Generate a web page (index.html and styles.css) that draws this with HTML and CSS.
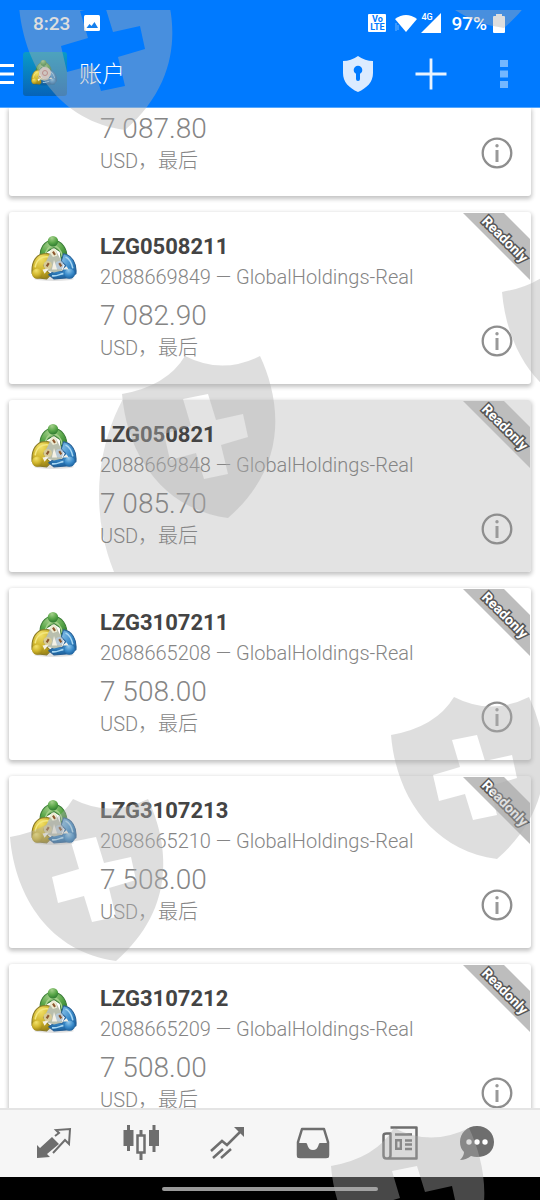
FILE: index.html
```html
<!DOCTYPE html>
<html lang="zh-CN">
<head>
<meta charset="utf-8">
<meta name="viewport" content="width=device-width, initial-scale=1">
<title>账户</title>
<link rel="stylesheet" href="styles.css">
</head>
<body>
<svg class="defs" aria-hidden="true">
  <defs>
    <radialGradient id="green" cx=".4" cy=".2" r=".9"><stop offset="0" stop-color="#a5d08c"/><stop offset=".5" stop-color="#5aa749"/><stop offset="1" stop-color="#23702a"/></radialGradient>
    <radialGradient id="yellow" cx=".4" cy=".2" r=".9"><stop offset="0" stop-color="#f3e26a"/><stop offset=".5" stop-color="#d0b52c"/><stop offset="1" stop-color="#8a7410"/></radialGradient>
    <radialGradient id="blue" cx=".4" cy=".2" r=".9"><stop offset="0" stop-color="#8fc6ea"/><stop offset=".5" stop-color="#3b8ccb"/><stop offset="1" stop-color="#125490"/></radialGradient>
    <linearGradient id="tile" x1="0" y1="0" x2="0" y2="1"><stop offset="0" stop-color="#0a9bc8"/><stop offset="1" stop-color="#0663b8"/></linearGradient>
    <symbol id="logo" viewBox="0 0 44 44">
      <ellipse cx="22" cy="41" rx="19" ry="2" fill="#000" opacity=".12"/>
      <path d="M9 23C7 12 13 4 21 4s15 8 13 20l-5-1-1-8-6-4-7 4-1 8z" fill="url(#green)" stroke="#3c7d38"/>
      <path d="M13 21c1-7 3-11 8-12 6 1 8 5 9 11" fill="none" stroke="#a5d08c" stroke-width="1.500"/>
      <path d="M1 36C0 24 6 16 14 17c6-1 8 4 8 8l-5-1-5 4 4 6 3 3-4 4-10-1z" fill="url(#yellow)" stroke="#8b7b27"/>
      <path d="M4 30c1-7 6-11 13-10" fill="none" stroke="#f3e780" stroke-width="1.500"/>
      <path d="M43 36c1-10-4-18-12-19l-2 7 4 4-3 6-7-1-6 4 5 4 15-1z" fill="url(#blue)" stroke="#275f94"/>
      <path d="M33 20c4 2 6 6 7 11M20 38c5 1 8-2 11-2" fill="none" stroke="#a8d7f3" stroke-width="1.500"/>
      <circle cx="21" cy="5" r="5" fill="url(#green)"/><circle cx="6" cy="36" r="5" fill="url(#yellow)"/><circle cx="37" cy="36" r="5" fill="url(#blue)"/>
      <path d="M19 15l5-1 5 10 1 9-8 2-7-2-1-8z" fill="#b9bfae"/>
      <path d="M20 12l4 1 1 6-4 1-3-4z" fill="#ecebd2"/><circle cx="16" cy="28" r="4" fill="#d6cb98"/><circle cx="27" cy="28" r="4" fill="#b9cad6"/>
      <path d="M22 23l3 9h-5zM11 32l6-1-4 5zM30 32l4-3 2 3z" fill="#f4f1e6"/>
      <path d="M21 15l2 3M17 26l-2 3M27 26l2 3" stroke="#8c572e" stroke-width="2"/>
    </symbol>
    <symbol id="info" viewBox="0 0 32 32">
      <circle cx="16" cy="16" r="14.300" fill="none" stroke="#8e8e8e" stroke-width="2.300"/>
      <circle cx="16" cy="8.800" r="1.700" fill="#999"/><path d="M16 13v12" stroke="#999" stroke-width="3"/>
    </symbol>
    <path id="guard" fill-rule="evenodd" d="M0 0Q45-8 63-38Q100-19 138-38C158 5 168 70 106 124C40 115 5 60 0 0ZM61 5L69 32L42 40L48 66L74 59L82 85L106 80L99 51L126 43L121 20L94 26L86 0Z"/>
  </defs>
</svg>
<div class="app">
  <header class="top">
    <div class="status">
      <span class="clock">8:23</span>
      <svg class="photo" width="16" height="16" viewBox="0 0 16 16"><rect width="16" height="16" rx="1.500" fill="#fff"/><path d="M2.500 13l3-4 2 2 3-4 3.500 6z" fill="#147fed"/></svg>
      <span class="spring"></span>
      <span class="volte"><span>Vo</span><span>LTE</span></span>
      <svg class="wifi" width="22" height="18" viewBox="0 0 22 18"><path d="M0 5Q11-3 22 5L11 18z" fill="#fff"/><path d="M1 9v8M3 11v5" stroke="#6cb5ff"/></svg>
      <span class="cell"><span class="gen">4G</span><svg width="20" height="20" viewBox="0 0 20 20"><path d="M20 0v20H0z" fill="#fff"/></svg></span>
      <span class="percent">97%</span>
      <svg width="12" height="19" viewBox="0 0 12 19"><path d="M3 0h6v2h2q1 0 1 1v15q0 1-1 1H1q-1 0-1-1V3q0-1 1-1h2z" fill="#fff"/></svg>
    </div>
    <div class="toolbar">
      <button class="tool menu" aria-label="菜单"><svg width="14" height="22" viewBox="0 0 14 22"><path d="M0 2.500h14M0 11h14M0 19.500h14" stroke="#fff" stroke-width="3"/></svg></button>
      <svg class="appicon" width="44" height="44" viewBox="0 0 44 44"><rect width="44" height="44" rx="3" fill="url(#tile)"/><use href="#logo" x="8" y="8" width="26" height="26"/><circle cx="22" cy="21" r="6" fill="#e5d6cc"/><circle cx="22" cy="21" r="2.500" fill="none" stroke="#c47873"/></svg>
      <h1>账户</h1>
      <button class="tool" aria-label="安全"><svg width="32" height="36" viewBox="0 0 32 36"><path d="M16 0Q23 5 31 5V17C31 26 25 32 16 36C7 32 1 26 1 17V5Q9 5 16 0z" fill="#dcebff"/><circle cx="16" cy="14" r="4.300" fill="#007aff"/><path d="M16 15v8" stroke="#007aff" stroke-width="4" stroke-linecap="round"/></svg></button>
      <button class="tool" aria-label="添加"><svg width="32" height="32" viewBox="0 0 32 32"><path d="M0.500 16h31M16 .5v31" stroke="#e8f3ff" stroke-width="2.800"/></svg></button>
      <button class="tool" aria-label="更多"><svg width="8" height="30" viewBox="0 0 8 30"><path d="M0 1h8v7H0zM0 11.500h8v7H0zM0 22h8v7H0z" fill="#73b7ff"/></svg></button>
    </div>
  </header>

  <main class="accounts">
    <article class="card first">
      <div class="details"><p class="amount">7 087.80</p><p class="currency">USD，最后</p></div>
      <button class="info" aria-label="信息"><svg><use href="#info"/></svg></button>
    </article>
    <article class="card">
      <svg class="logo"><use href="#logo"/></svg>
      <div class="details"><h2>LZG0508211</h2><p class="server">2088669849 — GlobalHoldings-Real</p><p class="amount">7 082.90</p><p class="currency">USD，最后</p></div>
      <button class="info" aria-label="信息"><svg><use href="#info"/></svg></button>
      <div class="ribbon"><span>Readonly</span></div>
    </article>
    <article class="card pressed">
      <svg class="logo"><use href="#logo"/></svg>
      <div class="details"><h2>LZG050821</h2><p class="server">2088669848 — GlobalHoldings-Real</p><p class="amount">7 085.70</p><p class="currency">USD，最后</p></div>
      <button class="info" aria-label="信息"><svg><use href="#info"/></svg></button>
      <div class="ribbon"><span>Readonly</span></div>
    </article>
    <article class="card">
      <svg class="logo"><use href="#logo"/></svg>
      <div class="details"><h2>LZG3107211</h2><p class="server">2088665208 — GlobalHoldings-Real</p><p class="amount">7 508.00</p><p class="currency">USD，最后</p></div>
      <button class="info" aria-label="信息"><svg><use href="#info"/></svg></button>
      <div class="ribbon"><span>Readonly</span></div>
    </article>
    <article class="card">
      <svg class="logo"><use href="#logo"/></svg>
      <div class="details"><h2>LZG3107213</h2><p class="server">2088665210 — GlobalHoldings-Real</p><p class="amount">7 508.00</p><p class="currency">USD，最后</p></div>
      <button class="info" aria-label="信息"><svg><use href="#info"/></svg></button>
      <div class="ribbon"><span>Readonly</span></div>
    </article>
    <article class="card">
      <svg class="logo"><use href="#logo"/></svg>
      <div class="details"><h2>LZG3107212</h2><p class="server">2088665209 — GlobalHoldings-Real</p><p class="amount">7 508.00</p><p class="currency">USD，最后</p></div>
      <button class="info" aria-label="信息"><svg><use href="#info"/></svg></button>
      <div class="ribbon"><span>Readonly</span></div>
    </article>
  </main>

  <nav class="tabs">
    <button aria-label="行情"><svg viewBox="0 0 36 36"><path d="M1 33V20l3 3L16 12l7 7L11 29l3 3z" fill="#6e6e6e"/><path d="M19 11l4-3-3-3 14-1-1 15-4-4-12 13" fill="none" stroke="#6e6e6e" stroke-width="2"/></svg></button>
    <button aria-label="图表"><svg viewBox="0 0 36 36"><path d="M5.500 0v26M31 0v27M18 5v30" stroke="#6e6e6e" stroke-width="3"/><path d="M.5 5h10v16H.5zM26 5h10v16H26z" fill="#6e6e6e"/><path d="M14.500 10.500h7v17h-7z" fill="#f6f6f6" stroke="#6e6e6e" stroke-width="2.500"/></svg></button>
    <button aria-label="交易"><svg viewBox="0 0 36 36"><path d="M2 26L13 16l5 4L32 6M4 33l10-9M12 33l10-9" fill="none" stroke="#6e6e6e" stroke-width="2.500"/><path d="M25 2h10v10z" fill="#6e6e6e"/></svg></button>
    <button aria-label="历史"><svg viewBox="0 0 36 36"><path d="M7 4h22l4 13v13q0 2-2 2H5q-2 0-2-2V17z" fill="none" stroke="#6e6e6e" stroke-width="2.500" stroke-linejoin="round"/><path d="M2 18h9c2 0 1 7 7 7s5-7 7-7h9v13q0 2-2 2H4q-2 0-2-2z" fill="#6e6e6e"/></svg></button>
    <button aria-label="新闻"><svg viewBox="0 0 36 36"><path d="M8.500 2.500h26v31H4.500q-3 0-3-3v-20q0-2 3-2h4v22q0 3-3 3" fill="none" stroke="#6e6e6e" stroke-width="2.500" stroke-linejoin="round"/><path d="M13 9.500h17M23 15.500h7M23 19.500h7M23 24h7" stroke="#6e6e6e" stroke-width="2.300"/><path d="M14.200 15.200h4.600v8.600h-4.600z" fill="none" stroke="#6e6e6e" stroke-width="2.400"/></svg></button>
    <button aria-label="消息"><svg viewBox="0 0 36 36"><path d="M18 1C28 1 35 8 35 17s-7 15-17 15q-3 0-6-1-5 4-11 4 4-4 4-8Q1 23 1 17C1 8 8 1 18 1z" fill="#6e6e6e"/><circle cx="10" cy="17" r="2.700" fill="#fff"/><circle cx="18" cy="17" r="2.700" fill="#fff"/><circle cx="26" cy="17" r="2.700" fill="#fff"/></svg></button>
  </nav>
  <div class="gesture"><div class="pill"></div></div>

  <svg class="watermark" aria-hidden="true">
    <use href="#guard" x="19" y="6"/><use href="#guard" x="398" y="-96"/>
    <use href="#guard" x="122" y="394"/><use href="#guard" x="502" y="292"/>
    <use href="#guard" x="10" y="837"/><use href="#guard" x="391" y="735"/>
    <use href="#guard" x="331" y="1166"/>
  </svg>
</div>
</body>
</html>
```

FILE: styles.css
```css
* { box-sizing: border-box; }
body { margin: 0; background: #fff; font-family: Roboto, "Noto Sans CJK SC", sans-serif; }
h1, h2, p { margin: 0; font-weight: 400; }
button { padding: 0; border: 0; background: none; display: flex; align-items: center; justify-content: center; }
svg { display: block; flex: none; }
.defs { position: absolute; width: 0; height: 0; }
.app { position: relative; display: flex; flex-direction: column; height: 100vh; overflow: hidden; }

.top { flex: none; background: #007aff; color: #fff; border-bottom: 1px solid #55a8ff; }
.status { display: flex; align-items: center; height: 46px; padding: 0 35px 0 33px; }
.clock, .percent { font-size: 19px; font-weight: 500; }
.photo { margin-left: 14px; }
.spring { flex: 1; }
.volte { display: flex; flex-direction: column; width: 18px; height: 18px; padding-top: 1px; border-radius: 1px; background: #fff; color: #007aff; font-size: 9px; font-weight: 700; line-height: 8px; text-align: center; }
.wifi { margin-left: 9px; }
.cell { position: relative; margin: 0 10px 0 4px; }
.gen { position: absolute; left: 0; top: 0; font-size: 9px; line-height: 9px; font-weight: 500; }
.percent { margin-right: 6px; }
.toolbar { display: flex; align-items: center; height: 61px; padding-right: 32px; padding-bottom: 5px; }
.appicon { margin-left: 9px; }
.toolbar h1 { flex: 1; margin-left: 12px; padding-top: 2px; font-size: 23px; font-weight: 300; line-height: 30px; }
.tool + .tool { margin-left: 41px; }
.tool:last-child { margin-left: 53px; }

.accounts { flex: 1; min-height: 0; overflow: hidden; padding: 0 9px; }
.card { position: relative; display: flex; height: 172px; margin-bottom: 16px; padding: 20px 18px 20px 22px; border-radius: 3px; background: #fff; box-shadow: 0 2px 4px 1px #c4c4c4; overflow: hidden; isolation: isolate; }
.card.first { height: auto; padding-top: 0; padding-left: 91px; border-top-left-radius: 0; border-top-right-radius: 0; }
.card.first .amount { margin-top: 4px; }
.pressed::before { content: ""; position: absolute; z-index: -1; left: 90px; right: -205px; top: -110px; height: 410px; border-radius: 205px; background: #e3e3e3; }
.logo { width: 46px; height: 46px; margin-top: 4px; }
.details { flex: 1; min-width: 0; margin-left: 23px; color: #858585; }
.first .details { margin-left: 0; }
.card h2 { font-size: 22px; line-height: 30px; font-weight: 700; color: #444; }
.server, .currency { font-size: 20px; line-height: 30px; font-weight: 300; }
.amount { margin-top: 7px; font-size: 28px; line-height: 34px; font-weight: 300; }
.info { align-self: flex-end; margin-bottom: 7px; }
.info svg { width: 32px; height: 32px; }
.ribbon { position: absolute; top: 1px; right: 1px; width: 67px; height: 67px; background: #bdbdbd; clip-path: polygon(0 0, 41px 0, 100% 26px, 100% 100%); display: flex; align-items: center; justify-content: center; }
.ribbon span { font-size: 14px; font-weight: 700; line-height: 16px; color: #fff; -webkit-text-stroke: 3px #555; paint-order: stroke fill; transform: translate(9px, -8px) rotate(45deg); }

.tabs { flex: none; display: flex; height: 69px; padding: 0 28px 2px 11px; border-top: 2px solid #e4e4e4; background: #f6f6f6; }
.tabs button { flex: 5; }
.tabs button:last-child { flex: 4; }
.tabs svg { width: 36px; height: 36px; }
.gesture { flex: none; display: flex; align-items: center; justify-content: center; height: 23px; background: #000; }
.pill { width: 40%; height: 4px; border-radius: 2px; background: #999; }
.watermark { position: absolute; left: 0; top: 0; width: 100%; height: 100%; clip-path: inset(10px 0 0 0); fill: rgb(175 175 175 / .41); pointer-events: none; }
```
